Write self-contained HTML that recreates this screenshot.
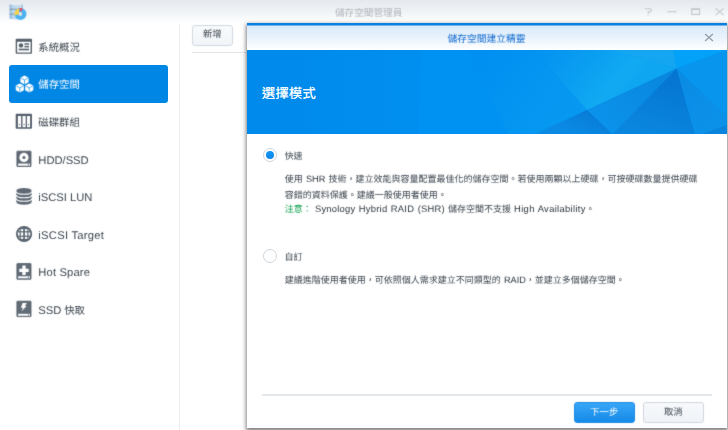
<!DOCTYPE html>
<html lang="zh-TW">
<head>
<meta charset="utf-8">
<title>儲存空間管理員</title>
<style>
*{box-sizing:border-box;margin:0;padding:0}
html,body{width:728px;height:430px;overflow:hidden;background:#fff}
body{position:relative;font-family:"Liberation Sans",sans-serif;color:#505a64;-webkit-font-smoothing:antialiased;text-rendering:geometricPrecision}
.abs{position:absolute}
.nav .t,.bt,#wtitle,#dtitle,#add,#next,#cancel,#icons{filter:url(#soft)}
#titlebar{left:0;top:0;width:728px;height:24px;background:linear-gradient(#e5e9ee 0,#eff2f5 45%,#fbfcfd 85%,#fff 100%)}
#wtitle{left:335px;top:7px;font-size:9.65px;line-height:14px;color:#b3b8be;white-space:nowrap}
#vdiv{left:178.6px;top:24px;width:1.7px;height:406px;background:#ebedf0}
#tline{left:192px;top:52px;width:60px;height:1px;background:#e2e6eb}
.nav{left:0;width:179px;height:37.5px}
.nav .t{position:absolute;left:38.3px;top:2px;line-height:37.5px;white-space:nowrap;font-size:10.4px;color:#3a444e}
.nav .l{font-size:11.2px}
#sel{left:9px;top:65px;width:159px;height:38px;background:#0086e5;border-radius:3px}
.btn{height:21px;border-radius:3px;text-align:center;white-space:nowrap}
#add{left:192px;top:25px;width:40.5px;height:20.5px;border:1px solid #d2d8e0;background:linear-gradient(#f8fafc,#f1f4f8);font-size:9.3px;line-height:17.5px;color:#3c4650}
#dlg{left:246.5px;top:23px;width:480px;height:404.8px;background:#fff;box-shadow:0 1.5px 4px 1px rgba(0,0,0,.5)}
#dtop{left:0;top:0;width:100%;height:3px;background:linear-gradient(#0a80e0 0,#0a80e0 2px,#6fb3ed 2px,#6fb3ed 3px)}
#dhead{left:0;top:3px;width:100%;height:24.2px;background:linear-gradient(#d9e9fa 0,#e8f2fc 45%,#fafcfe 90%,#fff 100%)}
#dtitle{left:0;top:9px;width:100%;text-align:center;font-size:9.75px;line-height:16px;color:#0f69cf;white-space:nowrap;font-weight:500}
#banner{left:0;top:27.2px;width:480px;height:83.8px;background:#0088e8;overflow:hidden}
#banner svg{position:absolute;left:0;top:0;width:480px;height:83.8px}
#h1{left:15.2px;top:62px;font-size:13.5px;line-height:18px;color:#fff;white-space:nowrap;font-weight:500;text-shadow:0 0 .6px rgba(255,255,255,.85)}
.radio{width:14.2px;height:14.2px;border-radius:50%;border:1.1px solid #cfd5dc;background:#fff}
.radio.on::after{content:"";position:absolute;left:1.95px;top:1.95px;width:8.1px;height:8.1px;border-radius:50%;background:linear-gradient(#1595f5,#0a88ea)}
.bt{font-size:9px;line-height:15px;color:#3a444e;white-space:nowrap;word-spacing:.6px}
.bt .l{font-size:9.4px;letter-spacing:.24px;color:#2c343d}
.bt .u{font-size:9.2px;letter-spacing:0}
.g{color:#0e9f4f}
#sep{left:15.5px;top:371px;width:449.7px;height:1.5px;background:#e5e8eb}
#next{left:327px;top:378.5px;width:61.5px;border:1px solid #1c8be4;background:linear-gradient(#38a6f7,#148ae7);color:#fff;font-size:9.3px;line-height:18px}
#cancel{left:396px;top:378.5px;width:61.5px;border:1px solid #cfd6dd;background:linear-gradient(#f7f9fc,#eff3f7);color:#3c4650;font-size:9.3px;line-height:18px}
</style>
</head>
<body>
<div id="titlebar" class="abs"></div>
<div id="wtitle" class="abs">儲存空間管理員</div>
<div id="vdiv" class="abs"></div>
<div id="tline" class="abs"></div>
<div id="sel" class="abs"></div>

<div class="nav abs" style="top:27.6px"><span class="t">系統概況</span></div>
<div class="nav abs" style="top:65.1px"><span class="t" style="color:#fff">儲存空間</span></div>
<div class="nav abs" style="top:102.6px"><span class="t">磁碟群組</span></div>
<div class="nav abs" style="top:140.1px"><span class="t l" style="top:3px">HDD/SSD</span></div>
<div class="nav abs" style="top:177.6px"><span class="t l">iSCSI LUN</span></div>
<div class="nav abs" style="top:215.1px"><span class="t l" style="top:3px;letter-spacing:.28px">iSCSI Target</span></div>
<div class="nav abs" style="top:252.6px"><span class="t l" style="letter-spacing:.15px">Hot Spare</span></div>
<div class="nav abs" style="top:290.1px"><span class="t" style="top:3px"><span class="l">SSD</span> 快取</span></div>

<svg id="icons" class="abs" style="left:0;top:0;width:728px;height:430px;pointer-events:none" viewBox="0 0 728 430">
<defs>
<linearGradient id="cyl" x1="9.6" y1="0" x2="23" y2="0" gradientUnits="userSpaceOnUse"><stop offset="0" stop-color="#8db6d8"/><stop offset=".25" stop-color="#bdd8ee"/><stop offset=".8" stop-color="#c9dff0"/><stop offset="1" stop-color="#9bc0de"/></linearGradient>
<filter id="soft" x="-2%" y="-10%" width="104%" height="120%" color-interpolation-filters="sRGB"><feConvolveMatrix order="3" kernelMatrix="1 4 1 4 30 4 1 4 1" divisor="50" edgeMode="none" preserveAlpha="false"/></filter>
<clipPath id="gc"><circle cx="24.05" cy="234" r="6.3"/></clipPath>
</defs>
<!-- app icon -->
<path d="M9.6,4.2 Q16.3,6 23,4.2 V18.8 Q16.3,20.2 9.6,18.8 Z" fill="url(#cyl)"/>
<rect x="9.6" y="8.8" width="13.4" height=".8" fill="#7d8a98"/>
<rect x="9.6" y="13.8" width="13.4" height=".8" fill="#7d8a98"/>
<circle cx="20.5" cy="14.1" r="4" fill="none" stroke="#4eb2f0" stroke-width="4"/>
<path d="M19,14.3 L14.5,15.4 A6.2,6.2 0 0 1 19,8.2 Z" fill="#fbd24a"/>
<path d="M20.8,12.3 L19.2,8 A6.3,6.3 0 0 1 22.9,8.4 Z" fill="#ee4b5e"/>
<circle cx="20.4" cy="14.1" r="1.5" fill="#dce9f4"/>
<!-- window controls -->
<g fill="none" stroke="#c2c7cd" stroke-width="1.1">
<path d="M644.7,8.8 H649.8 Q651.4,8.8 651.4,10.3 Q651.4,11.9 649.8,11.9 H648.2 V13.4"/>
<path d="M648.2,14.4 V15.4"/>
<path d="M667.2,11.7 H676.4"/>
<path d="M691.7,9.6 V14.4 H699.6 V9.6"/>
<path d="M691.2,9.1 H700.1" stroke-width="1.8"/>
<path d="M715.6,8.4 L723.6,15.2 M723.6,8.4 L715.6,15.2"/>
</g>
<!-- 1 overview -->
<path fill-rule="evenodd" fill="#55606b" d="M16.5,38.8 H31.2 Q32,38.8 32,39.6 V53 Q32,53.8 31.2,53.8 H16.5 Q15.7,53.8 15.7,53 V39.6 Q15.7,38.8 16.5,38.8 Z M17.1,41.7 V52.4 H30.6 V41.7 Z"/>
<circle cx="21" cy="45.4" r="2.2" fill="#55606b"/>
<rect x="24.4" y="43.3" width="4.6" height="1.5" fill="#55606b"/>
<rect x="24.4" y="45.9" width="4.6" height="1.5" fill="#55606b"/>
<rect x="18.7" y="48.7" width="10.3" height="1.6" fill="#55606b"/>
<!-- 2 cubes (white) -->
<g fill="#fff">
<polygon points="24.5,75.5 28.6,77.7 28.6,82.3 24.5,84.5 20.4,82.3 20.4,77.7"/>
<polygon points="19.8,83.4 23.9,85.6 23.9,90.2 19.8,92.4 15.7,90.2 15.7,85.6"/>
<polygon points="29.2,83.4 33.3,85.6 33.3,90.2 29.2,92.4 25.1,90.2 25.1,85.6"/>
</g>
<g fill="none" stroke="#0086e5" stroke-width=".65">
<path d="M24.5,84.5 V80 L20.4,77.7 M24.5,80 L28.6,77.7"/>
<path d="M19.8,92.4 V87.9 L15.7,85.6 M19.8,87.9 L23.9,85.6"/>
<path d="M29.2,92.4 V87.9 L25.1,85.6 M29.2,87.9 L33.3,85.6"/>
</g>
<!-- 3 disk group -->
<rect x="15.7" y="113.8" width="16.3" height="15" rx="1" fill="#55606b"/>
<g fill="#fff"><rect x="17.9" y="116" width="3.2" height="11.2"/><rect x="22.5" y="116" width="3.2" height="11.2"/><rect x="27" y="116" width="3.1" height="11.2"/></g>
<g fill="#55606b"><circle cx="19.5" cy="124.6" r=".65"/><circle cx="24.1" cy="124.6" r=".65"/><circle cx="28.55" cy="124.6" r=".65"/></g>
<!-- 4 hdd -->
<rect x="16.9" y="151.2" width="14.1" height="15.3" rx=".4" fill="#626c77" stroke="#4e5964" stroke-width=".8"/>
<circle cx="23.95" cy="157.4" r="4.6" fill="#fff"/><circle cx="23.95" cy="157.4" r="1.5" fill="#55606b"/>
<rect x="18.1" y="163.6" width="11.9" height="2.1" fill="#fff"/><circle cx="28.4" cy="164.65" r=".6" fill="#55606b"/>
<!-- 5 lun -->
<path d="M16.3,190.8 A7.7,2.8 0 0 1 31.7,190.8 V201.9 A7.7,2.8 0 0 1 16.3,201.9 Z" fill="#5f6974"/>
<g fill="none" stroke="#fff" stroke-width="1.15">
<path d="M16.3,191.4 A7.7,2.8 0 0 0 31.7,191.4"/><path d="M16.3,194.9 A7.7,2.8 0 0 0 31.7,194.9"/><path d="M16.3,198.4 A7.7,2.8 0 0 0 31.7,198.4"/>
</g>
<!-- 6 target globe -->
<circle cx="24.05" cy="234" r="8.1" fill="#59646f"/>
<g clip-path="url(#gc)" fill="#fff">
<rect x="17" y="229.1" width="14" height="2.1"/><rect x="17" y="232.4" width="14" height="3.2"/><rect x="17" y="236.8" width="14" height="2.1"/>
</g>
<g fill="#59646f"><rect x="19.6" y="228" width="1.2" height="12"/><rect x="23.2" y="228" width="1.7" height="12"/><rect x="27.3" y="228" width="1.2" height="12"/></g>
<!-- 7 hot spare -->
<rect x="16.9" y="263.6" width="14.1" height="15.7" rx=".4" fill="#626c77" stroke="#4e5964" stroke-width=".8"/>
<path d="M22.35,265.6 H25.65 V268.65 H28.7 V271.95 H25.65 V275 H22.35 V271.95 H19.3 V268.65 H22.35 Z" fill="#fff"/>
<rect x="18.1" y="276.3" width="11.9" height="2" fill="#fff"/><circle cx="28.4" cy="277.3" r=".6" fill="#55606b"/>
<!-- 8 ssd cache -->
<rect x="16.9" y="301.2" width="14.1" height="15.4" rx=".4" fill="#626c77" stroke="#4e5964" stroke-width=".8"/>
<polygon points="22.6,302.9 26.8,302.9 24.9,306.1 26.6,306.1 21.5,311.5 23,307.7 20.9,307.7" fill="#fff"/>
<rect x="18.1" y="313.8" width="11.9" height="2" fill="#fff"/><circle cx="28.4" cy="314.8" r=".6" fill="#55606b"/>
</svg>

<div id="add" class="btn abs">新增</div>

<div id="dlg" class="abs">
  <div id="dtop" class="abs"></div>
  <div id="dhead" class="abs"></div>
  <div id="dtitle" class="abs">儲存空間建立精靈</div>
  <svg class="abs" style="left:456px;top:9px;width:12px;height:11px" viewBox="702.5 32 12 11"><path d="M704.6,34 L712.4,41 M712.4,34 L704.6,41" fill="none" stroke="#949ba3" stroke-width="1.15"/></svg>
  <div id="banner" class="abs"><svg viewBox="246.5 50.2 480 83.8" preserveAspectRatio="none">
<defs>
<linearGradient id="bg" x1="246" y1="0" x2="470" y2="0" gradientUnits="userSpaceOnUse"><stop offset="0" stop-color="#008aeb"/><stop offset=".6" stop-color="#008dee"/><stop offset="1" stop-color="#0091f1"/></linearGradient>
<linearGradient id="f2" x1="480" y1="60" x2="570" y2="120" gradientUnits="userSpaceOnUse"><stop offset="0" stop-color="#0090f1"/><stop offset="1" stop-color="#0799f1"/></linearGradient>
<linearGradient id="glow" x1="545" y1="50" x2="612" y2="108" gradientUnits="userSpaceOnUse"><stop offset="0" stop-color="#0494f1"/><stop offset=".45" stop-color="#0a9ef1"/><stop offset=".85" stop-color="#11aaf2"/><stop offset="1" stop-color="#0fa6f1"/></linearGradient>
<linearGradient id="dk" x1="676" y1="69" x2="655" y2="134" gradientUnits="userSpaceOnUse"><stop offset="0" stop-color="#0473cf"/><stop offset="1" stop-color="#0a86df"/></linearGradient>
<linearGradient id="md" x1="676" y1="69" x2="600" y2="122" gradientUnits="userSpaceOnUse"><stop offset="0" stop-color="#0985dd"/><stop offset="1" stop-color="#0b92ea"/></linearGradient>
<linearGradient id="lo" x1="586" y1="110" x2="575" y2="134" gradientUnits="userSpaceOnUse"><stop offset="0" stop-color="#087cd7"/><stop offset="1" stop-color="#0a8ae4"/></linearGradient>
<linearGradient id="rt" x1="676" y1="69" x2="726" y2="134" gradientUnits="userSpaceOnUse"><stop offset="0" stop-color="#0a8be4"/><stop offset="1" stop-color="#0c92ea"/></linearGradient>
</defs>
<rect x="246" y="50" width="481" height="85" fill="url(#bg)"/>
<polygon points="421,50 466,50 507.7,134.2 417.6,134.2" fill="#0092f2"/>
<polygon points="466,50 532,50 586.5,110.3 535,134.2 507.7,134.2" fill="url(#f2)"/>
<polygon points="533,50 609.6,50 676,68.6 586.5,110.3" fill="url(#glow)"/>
<polygon points="609.6,50 672.8,50 676,68.6" fill="#15a6f1"/>
<polygon points="672.8,50 726.5,50 676,68.6" fill="#03a2f8"/>
<polygon points="726.5,50 726.5,116.6 676,68.6" fill="#0895ee"/>
<polygon points="726.5,116.6 726.5,134.2 694.2,134.2 676,68.6" fill="url(#rt)"/>
<polygon points="726.5,125.2 726.5,134.2 700.6,134.2" fill="#0984dd"/>
<polygon points="694.2,134.2 612,134.2 676,68.6" fill="url(#dk)"/>
<polygon points="612,134.2 586.5,110.3 676,68.6" fill="url(#md)"/>
<polygon points="535,134.2 586.5,110.3 612,134.2" fill="url(#lo)"/>
</svg></div>
  <div id="h1" class="abs">選擇模式</div>

  <div class="radio on abs" style="left:16.4px;top:125.2px"></div>
  <div class="bt abs" style="left:38.1px;top:125.5px">快速</div>
  <div class="bt abs" style="left:38.3px;top:149px">使用 <span class="l u">SHR</span> 技術，建立效能與容量配置最佳化的儲存空間。若使用兩顆以上硬碟，可按硬碟數量提供硬碟</div>
  <div class="bt abs" style="left:38.3px;top:164.5px">容錯的資料保護。建議一般使用者使用。</div>
  <div class="bt abs" style="left:38.3px;top:178px"><span class="g">注意：</span> <span class="l">Synology Hybrid RAID (SHR)</span> 儲存空間不支援 <span class="l" style="letter-spacing:.33px">High Availability</span>。</div>

  <div class="radio abs" style="left:16.4px;top:226.3px"></div>
  <div class="bt abs" style="left:38.1px;top:227px">自訂</div>
  <div class="bt abs" style="left:38.3px;top:250px">建議進階使用者使用，可依照個人需求建立不同類型的 <span class="l u">RAID</span>，並建立多個儲存空間。</div>

  <div id="sep" class="abs"></div>
  <div id="next" class="btn abs">下一步</div>
  <div id="cancel" class="btn abs">取消</div>
</div>
</body>
</html>
